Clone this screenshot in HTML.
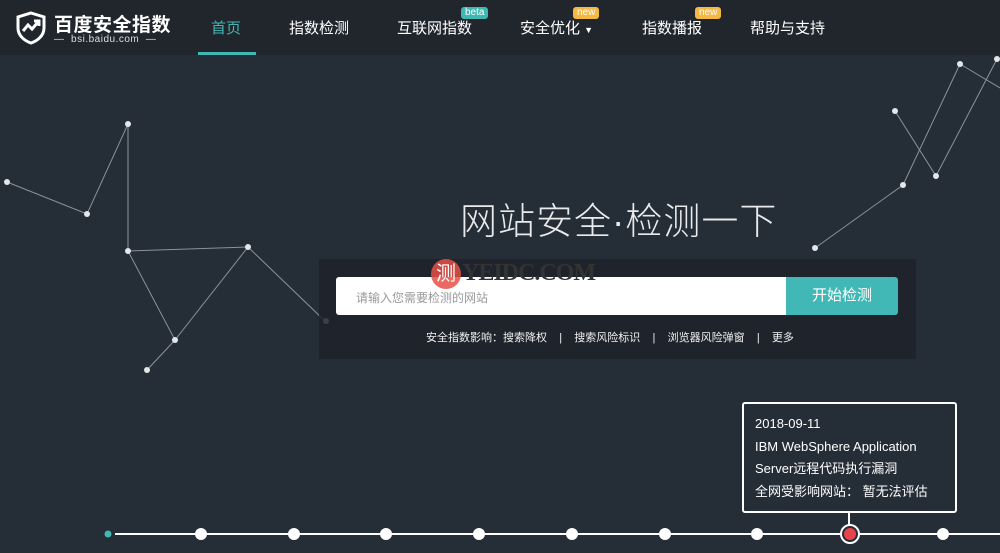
<!DOCTYPE html>
<html><head><meta charset="utf-8"><style>
*{margin:0;padding:0;box-sizing:border-box}
body{width:1000px;height:553px;overflow:hidden;background:#252d37;font-family:"Liberation Sans","Noto Sans CJK SC",sans-serif;position:relative;color:#fff}
.hdr{position:absolute;left:0;top:0;width:1000px;height:55px;background:#21262d}
.nav{position:absolute;top:17px;font-size:15px;color:#fff;white-space:nowrap}
.badge{position:absolute;font-size:10px;line-height:12px;padding:0 4px;border-radius:3px;color:#fff}
.abs{position:absolute;white-space:nowrap}
</style></head><body>
<svg class="abs" style="left:0;top:0" width="1000" height="553">
<g stroke="#8a929b" stroke-width="1" fill="none">
<path d="M7 182L87 214L128 124L128 251L248 247L325 321M128 251L175 340L248 247M175 340L147 370"/>
<path d="M960 64L1000 88M997 59L936 176L895 111M960 64L903 185L815 248"/>
</g>
<g fill="#e4e7ea">
<circle cx="7" cy="182" r="3"/><circle cx="87" cy="214" r="3"/><circle cx="128" cy="124" r="3"/><circle cx="128" cy="251" r="3"/><circle cx="248" cy="247" r="3"/><circle cx="175" cy="340" r="3"/><circle cx="147" cy="370" r="3"/><circle cx="326" cy="321" r="3"/>
<circle cx="960" cy="64" r="3"/><circle cx="997" cy="59" r="3"/><circle cx="895" cy="111" r="3"/><circle cx="936" cy="176" r="3"/><circle cx="903" cy="185" r="3"/><circle cx="815" cy="248" r="3"/>
</g>
</svg>
<div class="hdr"></div>
<svg class="abs" style="left:15px;top:11px" width="32" height="34" viewBox="0 0 32 34"><path d="M16 2L29 6V17C29 25 22 30 16 32C10 30 3 25 3 17V6Z" fill="none" stroke="#fff" stroke-width="3"/><path d="M8 20L13 14L17 18L24 10M19 10H24V15" fill="none" stroke="#fff" stroke-width="3"/></svg>
<div class="abs" style="left:54px;top:10px;font-size:19px;font-weight:bold;letter-spacing:0.5px">百度安全指数</div>
<div class="abs" style="left:54px;top:34px;font-size:10px;color:#ddd;letter-spacing:0.5px">— &nbsp;bsi.baidu.com&nbsp; —</div>
<div class="nav" style="left:211px;color:#3fb8b4">首页</div>
<div class="abs" style="left:198px;top:52px;width:58px;height:3px;background:#3fb8b4"></div>
<div class="nav" style="left:289px">指数检测</div>
<div class="nav" style="left:397px">互联网指数</div>
<div class="badge" style="left:461px;top:7px;background:#3fb8b4">beta</div>
<div class="nav" style="left:520px">安全优化 <span style="font-size:9px">▼</span></div>
<div class="badge" style="left:573px;top:7px;background:#f5b843">new</div>
<div class="nav" style="left:642px">指数播报</div>
<div class="badge" style="left:695px;top:7px;background:#f5b843">new</div>
<div class="nav" style="left:750px">帮助与支持</div>
<div class="abs" style="left:460px;top:191px;font-size:37px;font-weight:300;color:#e8eaec;letter-spacing:1px">网站安全·检测一下</div>
<div class="abs" style="left:319px;top:259px;width:597px;height:100px;background:rgba(30,35,42,0.85)"></div>
<div class="abs" style="left:336px;top:277px;width:450px;height:38px;background:#fff;border-radius:3px 0 0 3px"></div>
<div class="abs" style="left:356px;top:289px;font-size:12px;color:#999">请输入您需要检测的网站</div>
<div class="abs" style="left:786px;top:277px;width:112px;height:38px;background:#41b8b5;border-radius:0 3px 3px 0;font-size:15px;line-height:38px;text-align:center">开始检测</div>
<div class="abs" style="left:431px;top:259px;width:30px;height:30px;border-radius:50%;background:rgba(230,80,70,0.85);font-size:20px;line-height:30px;text-align:center">测</div>
<div class="abs" style="left:462px;top:260px;font-size:24px;font-weight:bold;color:#333;font-family:'Liberation Serif',serif;letter-spacing:-1px">YEIDC.COM</div>
<div class="abs" style="left:426px;top:329px;font-size:11px;color:#f0f0f0;">安全指数影响：搜索降权 &nbsp; &nbsp;| &nbsp; &nbsp;搜索风险标识 &nbsp; &nbsp;| &nbsp; &nbsp;浏览器风险弹窗 &nbsp; &nbsp;| &nbsp; &nbsp;更多</div>
<div class="abs" style="left:742px;top:402px;width:215px;height:111px;border:2px solid #fff;border-radius:3px;background:#252d37"></div>
<div class="abs" style="left:848px;top:511px;width:2px;height:14px;background:#fff"></div>
<div class="abs" style="left:755px;top:413px;font-size:13px;line-height:22.5px;color:#fff">2018-09-11<br>IBM WebSphere Application<br>Server远程代码执行漏洞<br>全网受影响网站： 暂无法评估</div>
<svg class="abs" style="left:0;top:520px" width="1000" height="33">
<line x1="115" y1="14" x2="1000" y2="14" stroke="#fff" stroke-width="2"/>
<circle cx="108" cy="14" r="3.5" fill="#41b8b5"/>
<g fill="#fff"><circle cx="201" cy="14" r="6"/><circle cx="294" cy="14" r="6"/><circle cx="386" cy="14" r="6"/><circle cx="479" cy="14" r="6"/><circle cx="572" cy="14" r="6"/><circle cx="665" cy="14" r="6"/><circle cx="757" cy="14" r="6"/><circle cx="943" cy="14" r="6"/></g>
<circle cx="850" cy="14" r="9" fill="#252d37" stroke="#fff" stroke-width="2"/>
<circle cx="850" cy="14" r="6" fill="#e8424a"/>
</svg>
</body></html>
